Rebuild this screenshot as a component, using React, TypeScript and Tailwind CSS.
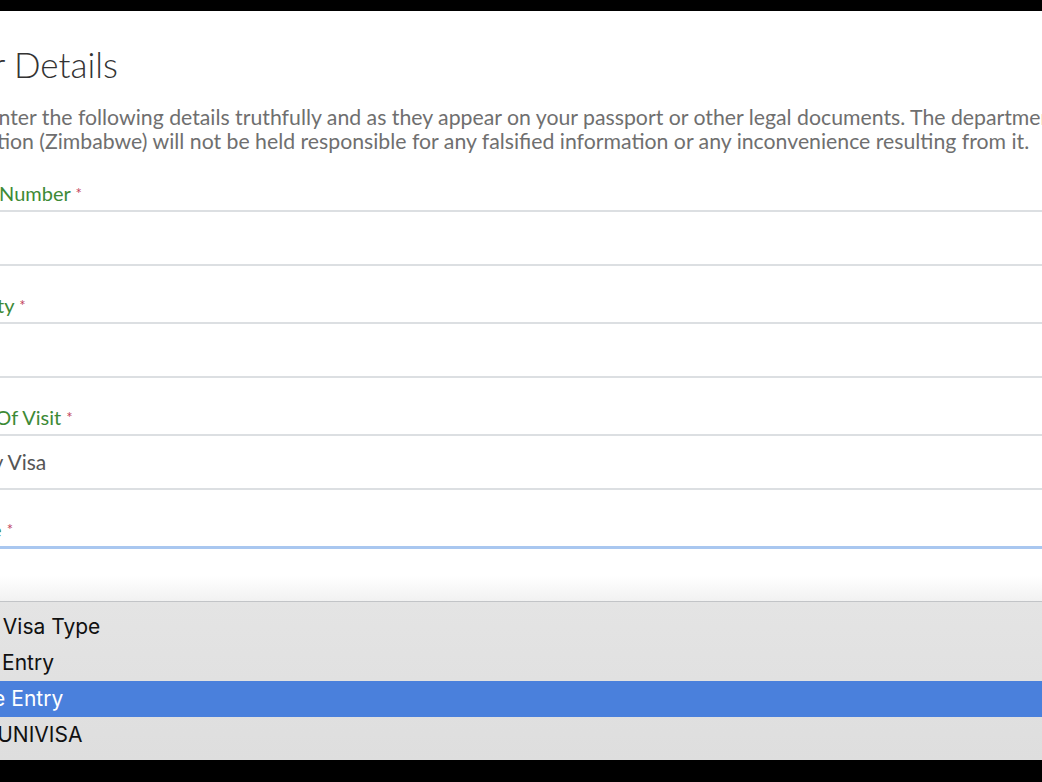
import React from "react";

function Field({ label, value, focused }: { label: string; value?: string; focused?: boolean }) {
  return (
    <div className="mb-[27px]">
      <div className="ml-[-12px] h-[24px] leading-[24px] mb-[5px] text-[20px] text-[#3d8a36] whitespace-nowrap">
        {label} <span className="text-[#c23f5a] text-[15px] align-top">*</span>
      </div>
      <div
        className={
          focused
            ? "h-[56px] border-t-[3px] border-t-[#a9c7f0] bg-gradient-to-b from-white via-white to-[#f1f1f1]"
            : "h-[56px] border-y-2 border-[#dcdfe2] bg-white flex items-center"
        }
      >
        {value && <span className="pl-[3px] text-[21px] text-[#555] whitespace-nowrap">{value}</span>}
      </div>
    </div>
  );
}

export default function App() {
  return (
    <div className="w-[1042px] h-[782px] bg-black overflow-hidden flex flex-col" style={{ fontFamily: "Lato, 'Noto Sans', sans-serif" }}>
      <div className="h-[11px] bg-black shrink-0" />
      <div className="flex-1 bg-white overflow-hidden relative">
        <div className="ml-[-70px] pt-[35px]">
          <h1 className="text-[35px] font-light leading-[37px] text-[#333] whitespace-nowrap pl-[7px]">Your Details</h1>
          <p className="ml-[-8px] mt-[22px] text-[21.25px] leading-[24px] text-[#6f6f6f] whitespace-nowrap">
            Please enter the following details truthfully and as they appear on your passport or other legal documents. The department of
            <br />
            Immigration (Zimbabwe) will not be held responsible for any falsified information or any inconvenience resulting from it.
          </p>
          <div className="mt-[28px]">
            <Field label="Passport Number" />
            <Field label="Nationality" />
            <Field label="Purpose Of Visit" value="Holiday Visa" />
            <Field label="Visa Type" focused />
          </div>
        </div>
        <div
          className="absolute left-0 right-0 top-[590px] h-[159px] bg-gradient-to-b from-[#e4e4e4] to-[#dedede] border-t border-[#c2c4c7] pt-[7px]"
          style={{ fontFamily: "Inter, 'Liberation Sans', Arial, sans-serif" }}
        >
          <div className="ml-[-65px] text-[21px] text-[#111]">
            {["Select Visa Type", "Single Entry", "Double Entry", "KAZA UNIVISA"].map((o, i) => (
              <div
                key={o}
                className={
                  i === 2
                    ? "h-[36px] leading-[36px] bg-[#4a80dc] text-white whitespace-nowrap"
                    : "h-[36px] leading-[36px] whitespace-nowrap"
                }
              >
                {o}
              </div>
            ))}
          </div>
        </div>
      </div>
      <div className="h-[22px] bg-black shrink-0" />
    </div>
  );
}
